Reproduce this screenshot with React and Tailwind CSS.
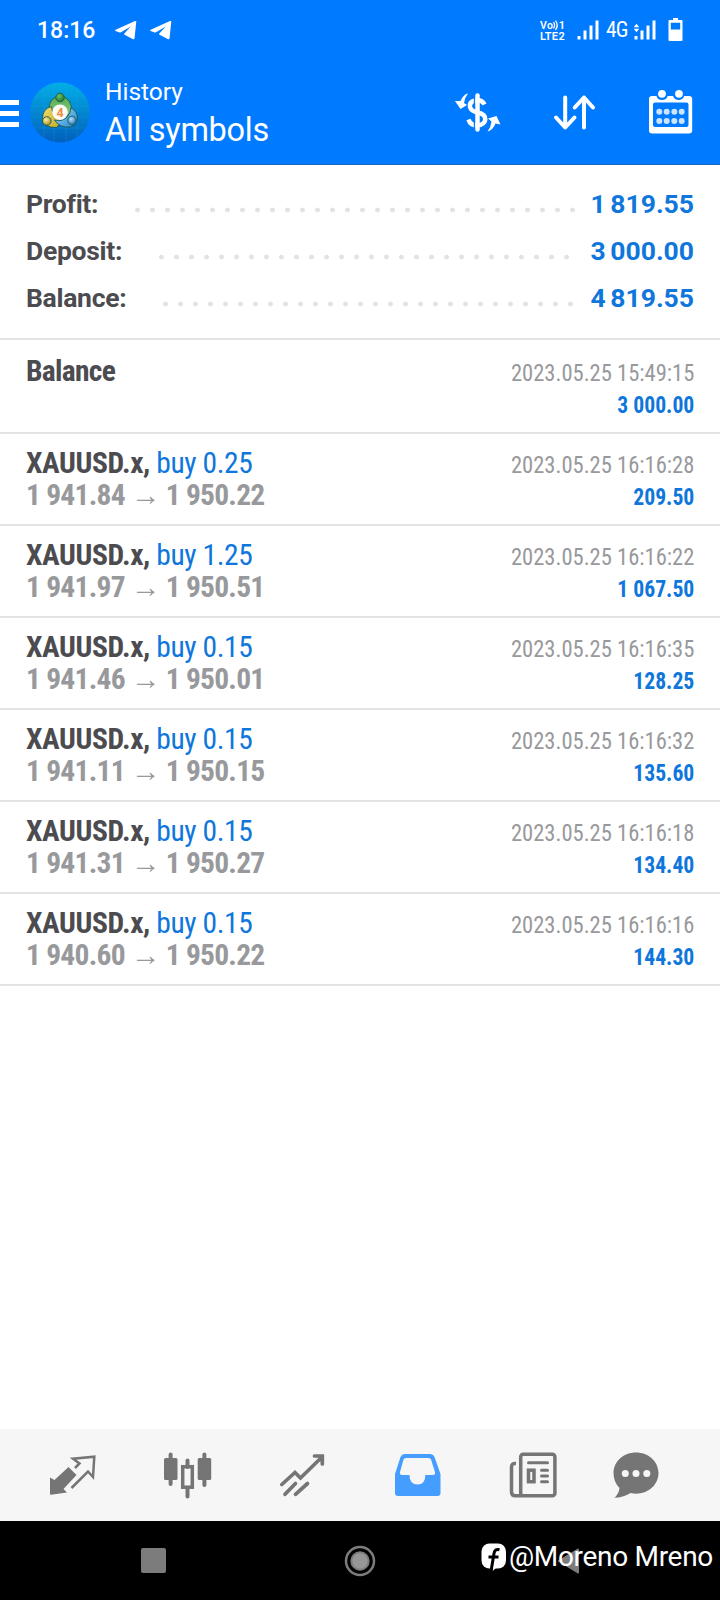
const summary = [
  { label: "Profit:", value: "1 819.55", dots: "w-[450px] mr-[10px]" },
  { label: "Deposit:", value: "3 000.00", dots: "w-[420px] mr-[16px]" },
  { label: "Balance:", value: "4 819.55", dots: "w-[420px] mr-[12px]" },
];

const deals = [
  { volume: "0.25", open: "1 941.84", close: "1 950.22", time: "2023.05.25 16:16:28", profit: "209.50" },
  { volume: "1.25", open: "1 941.97", close: "1 950.51", time: "2023.05.25 16:16:22", profit: "1 067.50" },
  { volume: "0.15", open: "1 941.46", close: "1 950.01", time: "2023.05.25 16:16:35", profit: "128.25" },
  { volume: "0.15", open: "1 941.11", close: "1 950.15", time: "2023.05.25 16:16:32", profit: "135.60" },
  { volume: "0.15", open: "1 941.31", close: "1 950.27", time: "2023.05.25 16:16:18", profit: "134.40" },
  { volume: "0.15", open: "1 940.60", close: "1 950.22", time: "2023.05.25 16:16:16", profit: "144.30" },
];

function Telegram() {
  return (
    <svg viewBox="0 0 22 19" className="w-[22px] h-[19px]" fill="#fff">
      <path d="M21.300.3 19.600 17q-.2 1.900-2 1.100l-8-4.300q-1-.7-.1-1.500L15.800 5.500 6 11.300Q5 11.700 4 11.300L.6 10q-1-.5.1-1.200L20 .1q1.400-.5 1.300.2z" />
    </svg>
  );
}

function Signal({ data }) {
  return (
    <svg viewBox="0 0 22 20" className="w-[22px] h-[20px] overflow-visible" fill="#fff">
      <path d="M.5 16h3v3.500h-3zM6.500 10.500h3v9h-3zM12.500 5.500h3v14h-3zM18.500.5h3v19h-3z" />
      {data && <path d="M2.500 3.800 5.300 7.300H-.3zM2.500 12.300 5.300 8.800H-.3z" />}
    </svg>
  );
}

function StatusBar() {
  return (
    <div className="h-[60px] pl-[37px] pr-[37px] flex items-center text-white">
      <span className="text-[23px] font-medium leading-none w-[78px] pt-px">18:16</span>
      <div className="flex gap-[13px]">
        <Telegram />
        <Telegram />
      </div>
      <div className="ml-auto flex items-center">
        <svg viewBox="0 0 30 24" className="w-[30px] h-[24px] mr-[7px]" fill="#fff" fontFamily="Roboto" fontWeight="600">
          <text x="0" y="11" fontSize="10.500" textLength="13">Vo</text>
          <path d="M13.500 4q2.200 3.300 0 6.500M15.500 2.500q3.400 5 0 9.500" fill="none" stroke="#fff" strokeWidth="1.300" />
          <text x="18.800" y="10.500" fontSize="11">1</text>
          <text x="0" y="21.500" fontSize="11" textLength="18">LTE</text>
          <text x="18.500" y="21.500" fontSize="11">2</text>
        </svg>
        <Signal />
        <span className="text-[21.500px] leading-none ml-[7px] mr-[8px] w-[20px] tracking-[-0.8px] whitespace-nowrap [font-stretch:75%]">4G</span>
        <Signal data />
        <svg viewBox="0 0 15 24" className="w-[15px] h-[24px] ml-[12px]">
          <path d="M5 0h5v2h3.200q1.300 0 1.300 1v19q0 1-1 1h-12q-1 0-1-1V3q0-1 1-1H5zM2.800 4.800v6.700h9.400V4.800z" fill="#fff" />
        </svg>
      </div>
    </div>
  );
}

function AppLogo() {
  return (
    <svg viewBox="0 0 60 61" className="w-[60px] h-[61px]">
      <defs>
        <linearGradient id="sky" x1="0" y1="0" x2="0" y2="1">
          <stop offset="0" stopColor="#02aee6" />
          <stop offset="1" stopColor="#035fbb" />
        </linearGradient>
        <linearGradient id="green" x1="0" y1="0" x2="0" y2="1">
          <stop offset="0" stopColor="#4fa84c" />
          <stop offset="1" stopColor="#8fd08a" />
        </linearGradient>
        <linearGradient id="gold" x1="0" y1="0" x2="1" y2="1">
          <stop offset="0" stopColor="#f0e06e" />
          <stop offset="1" stopColor="#c2a728" />
        </linearGradient>
        <linearGradient id="azure" x1="0" y1="0" x2="1" y2="1">
          <stop offset="0" stopColor="#a6dbf5" />
          <stop offset="1" stopColor="#1f86cf" />
        </linearGradient>
        <radialGradient id="greenBall" cx=".4" cy=".35" r=".7">
          <stop offset="0" stopColor="#6cc560" />
          <stop offset="1" stopColor="#1d6f2c" />
        </radialGradient>
        <radialGradient id="goldBall" cx=".4" cy=".35" r=".7">
          <stop offset="0" stopColor="#fbf0a0" />
          <stop offset="1" stopColor="#a98a1c" />
        </radialGradient>
        <radialGradient id="azureBall" cx=".4" cy=".35" r=".7">
          <stop offset="0" stopColor="#b6e4fa" />
          <stop offset="1" stopColor="#1769b4" />
        </radialGradient>
      </defs>
      <circle cx="30" cy="30.500" r="30" fill="url(#sky)" />
      <path d="M5 14h50M1 24h58M1 35h58M5 46h50M14 5v50M24 1v59M36 1v59M47 6v48" stroke="#2fc0e8" strokeOpacity=".22" strokeWidth=".8" />
      <g stroke="#1c5a55" strokeWidth=".9">
        <path d="M19 30q-1-15 11-16 12 1 11.500 16l-5 4h-13z" fill="url(#green)" />
        <path d="M21.500 24.500q-9 2-9 12.500 2 9 14 8.500l5.500-6-8-6q-2-4-2.500-9z" fill="url(#gold)" />
        <path d="M41 26q6.500 3 6.500 11-1.500 9-12 8-7-1-11-7 8 2 12.500-3 3.500-4 4-9z" fill="url(#azure)" />
        <circle cx="30" cy="15.500" r="4.300" fill="url(#greenBall)" />
        <circle cx="16.800" cy="39" r="4.300" fill="url(#goldBall)" />
        <circle cx="42" cy="38.500" r="4.300" fill="url(#azureBall)" />
      </g>
      <circle cx="30" cy="30.300" r="7.800" fill="#fdfaf5" />
      <text x="30" y="34.800" fontSize="12.500" fontWeight="700" fontFamily="Roboto" fill="#f08a3c" textAnchor="middle">4</text>
    </svg>
  );
}

function Header() {
  return (
    <div className="h-[105px] flex items-start border-b border-[#1668c0] text-white">
      <div className="w-[19px] mt-[40px] mr-[11px] flex flex-col gap-[6px]">
        <div className="h-[5px] bg-white" />
        <div className="h-[5px] bg-white" />
        <div className="h-[5px] bg-white" />
      </div>
      <div className="mt-[22px]">
        <AppLogo />
      </div>
      <div className="ml-[15px] mt-[14px]">
        <div className="text-[24.500px] leading-[36px]">History</div>
        <div className="text-[32.500px] leading-[40px] tracking-[-0.3px]">All symbols</div>
      </div>
      <div className="ml-auto mr-[27px] mt-[29px] flex">
        {/* currency refresh */}
        <svg viewBox="454 89 48 46" className="w-[48px] h-[46px] mr-[51px]">
          <path d="M484.500 104.500Q482 99.500 475 100.500 469 102 470 107 471 111 477.500 112.500 485.500 114 485.300 119.500 484.500 125 477 125.500 470.500 125.500 468.500 119.500" fill="none" stroke="#fff" strokeWidth="4.500" />
          <path d="M474.500 97V109M474.500 116V129" stroke="#007aff" strokeWidth="1.400" />
          <path d="M477.500 95.500V129.500" stroke="#fff" strokeWidth="4.500" strokeLinecap="round" />
          <path d="M468 93.500Q464 93.500 460.500 101L455 101 460.500 109 467 105 464 103Q465 97 468 93.500z" fill="#fff" />
          <path d="M487.500 131.500Q493 130 495.500 123.500L500.500 124.500 496.500 116 488 118.500 491.500 121.500Q491 127 487.500 131.500z" fill="#fff" />
        </svg>
        {/* sort */}
        <svg viewBox="553 94 43 38" className="w-[43px] h-[38px] mt-[5px] mr-[52px]" fill="none" stroke="#fff" strokeWidth="4" strokeLinecap="round" strokeLinejoin="round">
          <path d="M565.200 97.500V127.500M556 117.500 565.200 127.500 574.500 117.500M584 127.500V97.500M574.700 107.500 584 97.500 593 107.500" />
        </svg>
        {/* calendar */}
        <svg viewBox="648 89 45 45" className="w-[45px] h-[45px]" fill="#fff">
          <path fillRule="evenodd" d="M652 96h4.500q1 4 5.500 4t5.700-4h5.300q1.500 4 5.700 4t5.500-4h4.800q3.200 0 3.200 3v31.500q0 3-3.200 3H652q-3 0-3-3V99q0-3 3-3zM653 104.500v20.500q0 2 2 2h31.500q2 0 2-2v-20.500q0-2-2-2h-31.500q-2 0-2 2z" />
          <circle cx="662" cy="93.800" r="3.900" />
          <circle cx="679" cy="93.800" r="3.900" />
          <g fillOpacity=".8">
            <circle cx="659.300" cy="111.700" r="3" />
            <circle cx="666.700" cy="111.700" r="3" />
            <circle cx="674.300" cy="111.700" r="3" />
            <circle cx="681.700" cy="111.700" r="3" />
            <circle cx="659.300" cy="121" r="3" />
            <circle cx="666.700" cy="121" r="3" />
            <circle cx="674.300" cy="121" r="3" />
            <circle cx="681.700" cy="121" r="3" />
          </g>
        </svg>
      </div>
    </div>
  );
}

function Row({ children, time, profit, first }) {
  return (
    <div className={`flex justify-between px-[26px] border-b-2 border-[#e3e3e4] [font-stretch:75%] ${first ? "h-[94px] pt-[15px]" : "h-[92px] pt-[13px]"}`}>
      <div className="text-[29.500px] leading-[32px] whitespace-pre">{children}</div>
      <div className="pt-[2px] text-right text-[24.500px] leading-[32px] text-[#98999c]">
        <div className="origin-right scale-x-[0.92]">{time}</div>
        <div className="origin-right scale-x-[0.885] font-bold text-[#0f76dc]">{profit}</div>
      </div>
    </div>
  );
}

function TabBar() {
  return (
    <div className="h-[92px] bg-[#f6f6f7] pl-[15px] flex items-center text-[#757575]">
      <div className="w-[115px] flex justify-center">
        <svg viewBox="49 1454 47 42" className="w-[47px] h-[42px]" fill="currentColor">
          <path d="M50 1477.500 54.500 1480 68.500 1467 76.500 1475 63.500 1489 67 1492.500 51 1494.700Q50 1494.700 50 1493.500z" />
          <path d="M75 1468 79.500 1463.500 73 1458.700 94.300 1456.700 93 1477 88 1471.500 71.500 1488" fill="none" stroke="currentColor" strokeWidth="2.500" />
        </svg>
      </div>
      <div className="w-[115px] flex justify-center">
        <svg viewBox="163 1450 49 48" className="w-[49px] h-[48px]" fill="currentColor">
          <rect x="164" y="1457" width="13.500" height="22" rx="1.500" />
          <rect x="197.700" y="1457" width="13.500" height="22" rx="1.500" />
          <path d="M170.600 1453.500V1483M204.400 1453.500V1484M187.500 1459.500V1466M187.500 1487V1495.500" stroke="currentColor" strokeWidth="4" strokeLinecap="round" />
          <rect x="182.700" y="1465.700" width="9.600" height="20.500" fill="none" stroke="currentColor" strokeWidth="3.500" />
        </svg>
      </div>
      <div className="w-[115px] pr-px flex justify-center">
        <svg viewBox="279 1452 46 44" className="w-[46px] h-[44px]" fill="none" stroke="currentColor" strokeWidth="3.700" strokeLinecap="round">
          <path d="M281.800 1483.500 295 1471.500 300.500 1477 322 1456M314.500 1455H322.300V1463M285 1493.300 295.500 1482.500M295.500 1493.300 307.500 1482.500" />
        </svg>
      </div>
      <div className="w-[115px] flex justify-center">
        <svg viewBox="394 1452 47 44" className="w-[47px] h-[44px]">
          <path fillRule="evenodd" d="M405 1453h25q3 0 4.500 3l6 17v19q0 3-3 3h-39.500q-3 0-3-3v-19l5.500-17q1.500-3 4.500-3zM406 1457q-2 0-2.500 1.500L400 1471q-.5 3 2 3h7.500q0 9.500 8 9.500t7.800-9.500h7.700q2.500 0 2-3l-4-12.500q-.5-1.500-2.500-1.500z" fill="#459eff" />
        </svg>
      </div>
      <div className="w-[115px] pl-px flex justify-center">
        <svg viewBox="509 1450 49 48" className="w-[49px] h-[48px]" fill="none" stroke="currentColor" strokeWidth="3.500">
          <rect x="520.700" y="1453.200" width="34.200" height="41.600" rx="2.500" />
          <path d="M516 1462.500Q511.500 1462 511.500 1466V1491Q511.500 1494.800 515.500 1494.800H522" />
          <path d="M528.500 1461.800H547.500M541.500 1469.300H547.500M541.500 1475H547.500M541.500 1480.700H547.500" strokeLinecap="round" strokeWidth="3" />
          <rect x="528.500" y="1469.200" width="5.500" height="11.500" />
        </svg>
      </div>
      <div className="w-[91px] flex justify-center">
        <svg viewBox="613 1450 46 48" className="w-[46px] h-[48px]">
          <path d="M636 1451.500C648 1451.500 658.500 1460 658.500 1472S648 1492.700 636 1492.700Q633 1492.700 630.500 1492 623 1496.700 614.500 1496.700 619 1492.500 619.500 1487 613.500 1481 613.500 1472C613.500 1460 624 1451.500 636 1451.500z" fill="currentColor" />
          <g fill="#f6f6f7">
            <circle cx="625.300" cy="1472.500" r="3.500" />
            <circle cx="636" cy="1472.500" r="3.500" />
            <circle cx="646.800" cy="1472.500" r="3.500" />
          </g>
        </svg>
      </div>
    </div>
  );
}

function NavBar() {
  return (
    <div className="relative h-[79px] bg-black flex items-center">
      <div className="w-[25px] h-[25px] ml-[141px] rounded-[2px] bg-[#7c7c7c]" />
      <svg viewBox="0 0 32 32" className="w-[32px] h-[32px] ml-[178px]">
        <circle cx="16" cy="16" r="14" fill="none" stroke="#7c7c7c" strokeWidth="2.500" />
        <circle cx="16" cy="16" r="8.700" fill="#969696" stroke="#7c7c7c" strokeWidth="2" />
      </svg>
      <svg viewBox="0 0 22 26" className="w-[22px] h-[26px] ml-[182px]">
        <path d="M20 1.500V24.500L1 13z" fill="#7c7c7c" stroke="#7c7c7c" strokeWidth="2" strokeLinejoin="round" />
      </svg>
      {/* author tag laid over the system buttons */}
      <div className="absolute right-[7px] top-[19px] flex items-center text-white">
        <svg viewBox="0 0 26 28" className="w-[26px] h-[28px] mr-[2px]">
          <rect x=".5" y=".5" width="24.500" height="25" rx="8" fill="#fff" />
          <path d="M12.500 24 11.700 28 16 24z" fill="#fff" />
          <path d="M18.500 6.800Q13.800 5.500 13 10.500L10.300 26.500M7.500 14H17.500" fill="none" stroke="#000" strokeWidth="3" />
        </svg>
        <span className="text-[28px] leading-[34px] font-[380] tracking-[-0.3px]">@Moreno Mreno</span>
      </div>
    </div>
  );
}

export default function App() {
  return (
    <div className="w-[720px] h-[1600px] flex flex-col overflow-hidden bg-white font-[Roboto,sans-serif]">
      <div className="bg-[#007aff]">
        <StatusBar />
        <Header />
      </div>

      <div className="px-[26px] pt-[15px] h-[175px] border-b-2 border-[#e3e3e4] text-[26.500px] font-bold">
        {summary.map((s) => (
          <div key={s.label} className="h-[47px] leading-[48px] flex">
            <span className="text-[#4b4b50] tracking-[-0.3px]">{s.label}</span>
            <div className={`ml-auto mt-[27px] h-[6px] shrink-0 bg-[radial-gradient(circle,#e3e3e4_2px,transparent_2.800px)] bg-[length:15px_6px] ${s.dots}`} />
            <span className="w-[104px] flex justify-end whitespace-nowrap text-[#0f76dc] [word-spacing:-2px]">{s.value}</span>
          </div>
        ))}
      </div>

      <Row first time="2023.05.25 15:49:15" profit="3 000.00">
        <div className="font-bold text-[#4b4b50] tracking-[-0.7px]">Balance</div>
      </Row>
      {deals.map((d) => (
        <Row key={d.time} time={d.time} profit={d.profit}>
          <div className="tracking-[-0.4px]">
            <span className="font-bold text-[#4b4b50]">XAUUSD.x,</span>
            <span className="text-[#0f76dc]"> buy {d.volume}</span>
          </div>
          <div className="font-bold text-[#98999c] tracking-[-0.75px]">{d.open} → {d.close}</div>
        </Row>
      ))}

      <div className="mt-auto">
        <TabBar />
        <NavBar />
      </div>
    </div>
  );
}
